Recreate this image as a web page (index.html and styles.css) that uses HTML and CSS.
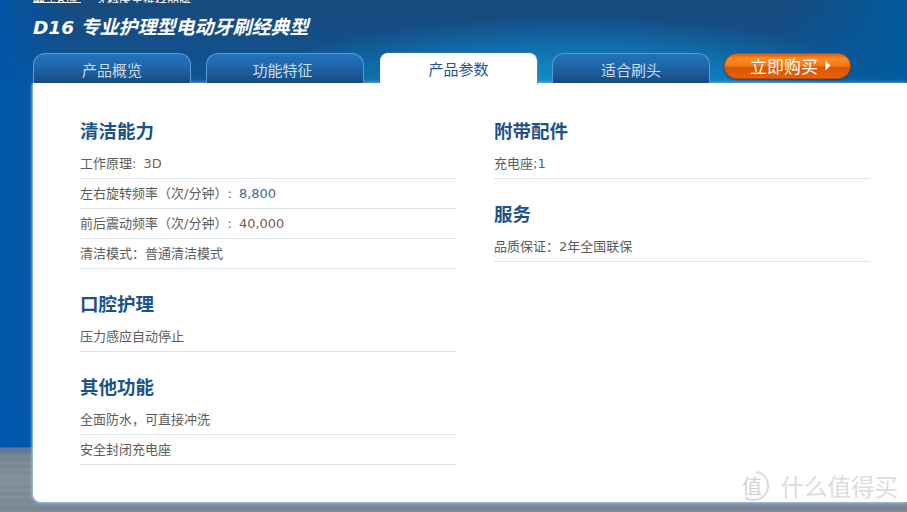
FILE: index.html
```html
<!DOCTYPE html>
<html lang="zh-CN">
<head>
    <meta charset="UTF-8">
    <title>D16 产品参数</title>
    <link rel="stylesheet" href="styles.css">
</head>
<body>
    <div class="page">
        <div class="topline">
            <span class="logo">欧乐B博朗</span>
            <span class="slogan">牙科医生推荐品牌</span>
        </div>
        <h1 class="title"><b>D16</b> 专业护理型电动牙刷经典型</h1>
        <div class="tabs">
            <a class="tab">产品概览</a>
            <a class="tab">功能特征</a>
            <a class="tab active">产品参数</a>
            <a class="tab">适合刷头</a>
            <a class="buy">立即购买<svg width="6" height="11" viewBox="0 0 6 11"><path d="M0.5 0.5 L5.5 5.5 L0.5 10.5 Z" fill="#fff"/></svg></a>
        </div>
        <div class="panel">
            <div class="col">
                <div class="section">
                    <h2>清洁能力</h2>
                    <div class="row">工作原理<i class="brown">: 3D</i></div>
                    <div class="row">左右旋转频率（次/分钟）<i class="blue">: 8,800</i></div>
                    <div class="row">前后震动频率（次/分钟）<i class="brown">: 40,000</i></div>
                    <div class="row">清洁模式：普通清洁模式</div>
                </div>
                <div class="section">
                    <h2>口腔护理</h2>
                    <div class="row">压力感应自动停止</div>
                </div>
                <div class="section">
                    <h2>其他功能</h2>
                    <div class="row">全面防水，可直接冲洗</div>
                    <div class="row">安全封闭充电座</div>
                </div>
            </div>
            <div class="col">
                <div class="section">
                    <h2>附带配件</h2>
                    <div class="row">充电座<i class="blue">;1</i></div>
                </div>
                <div class="section">
                    <h2>服务</h2>
                    <div class="row">品质保证：2年全国联保</div>
                </div>
            </div>
        </div>
        <div class="mark">
            <svg class="mark-logo" width="30" height="32" viewBox="0 0 30 32">
                <path d="M17 2 C25 3 29 9 29 16 C29 24 23 30 15 30 C11 30 8 29 6 27" fill="none" stroke="#dcdcdc" stroke-width="2"/>
                <text x="13" y="24" text-anchor="middle">值</text>
            </svg>
            <span>什么值得买</span>
        </div>
    </div>
</body>
</html>
```

FILE: styles.css
```css
* {
    margin: 0;
    padding: 0;
    box-sizing: border-box;
}
body {
    width: 907px;
    height: 512px;
    overflow: hidden;
    font-family: "DejaVu Sans", "Noto Sans CJK SC", sans-serif;
}
.page {
    position: relative;
    height: 512px;
    padding-left: 33px;
    overflow: hidden;
    background:
        linear-gradient(90deg, rgba(0,86,170,.95) 0, rgba(0,86,170,0) 70px) 0 0 / 100% 447px no-repeat,
        linear-gradient(270deg, rgba(0,92,160,.9) 0, rgba(0,92,160,0) 130px) 0 0 / 100% 100px no-repeat,
        radial-gradient(ellipse 330px 75px at 570px 92px, #0f93d0 0, rgba(15,147,208,.7) 40%, rgba(15,147,208,0) 100%),
        repeating-linear-gradient(180deg, rgba(255,255,255,.025) 0, rgba(255,255,255,.025) 3px, rgba(0,0,0,.02) 3px, rgba(0,0,0,.02) 7px) 0 447px / 100% 65px no-repeat,
        linear-gradient(180deg, #184a7d 0, #12508c 50px, #0a5a9c 100px, #0358ac 447px, #52749a 448px, #76868f 456px, #84919a 480px, #7b8891 512px);
}
.topline {
    display: flex;
    gap: 14px;
    height: 3px;
    overflow: hidden;
    font-size: 12px;
    line-height: 3px;
    color: #fff;
}
.logo {
    width: 48px;
    border-bottom: 1px solid #fff;
    background: #123f70;
}
.title {
    margin-top: 10px;
    height: 25px;
    font-size: 19px;
    line-height: 25px;
    font-weight: bold;
    font-style: italic;
    color: #fff;
    font-family: "Noto Sans CJK SC", sans-serif;
}
.title b {
    font-family: "DejaVu Sans", sans-serif;
    font-size: 18.5px;
    margin-right: 2px;
}
.tabs {
    display: flex;
    align-items: flex-start;
    margin-top: 15px;
    height: 30px;
    gap: 15px;
}
.tab {
    width: 158px;
    height: 30px;
    border: 1px solid #5d9ccf;
    border-bottom: 0;
    border-radius: 12px 12px 0 0;
    background: linear-gradient(180deg, #2272bb 0, #1f68ad 40%, #174a80 100%);
    color: #cddbeb;
    font-size: 15px;
    line-height: 32px;
    text-align: center;
    font-family: "Noto Sans CJK SC", sans-serif;
}
.tab:nth-child(2) {
    padding-right: 5px;
}
.tab.active {
    position: relative;
    width: 157px;
    height: 32px;
    margin-left: 1px;
    border: 0;
    border-radius: 8px 8px 0 0;
    background: #fff;
    color: #1f5497;
    line-height: 32px;
    box-shadow: 1px 0 2px rgba(90,140,200,.7);
    clip-path: inset(-3px -3px 0 -3px);
}
.buy {
    display: flex;
    align-items: center;
    justify-content: center;
    gap: 7px;
    width: 127px;
    height: 26px;
    margin-left: -1px;
    padding-bottom: 1px;
    padding-left: 6px;
    border-radius: 13px;
    border: 1px solid #c34a05;
    background: linear-gradient(180deg, #df5b08 0, #ff8a22 18%, #f37a18 50%, #dc5400 55%, #e66205 100%);
    box-shadow: 0 1px 2px rgba(10,50,100,.6);
    color: #fff;
    font-size: 17px;
    font-family: "Noto Sans CJK SC", sans-serif;
}
.panel {
    display: flex;
    gap: 38px;
    height: 419px;
    padding: 35px 36px 0 47px;
    background: #fff;
    border-radius: 0 0 0 8px;
    box-shadow: 0 0 4px #8fb6de, -1px 1px 2px #9fc2e6;
}
.col {
    width: 376px;
}
.section + .section {
    margin-top: 22px;
}
h2 {
    height: 31px;
    font-size: 18.5px;
    line-height: 24px;
    font-weight: bold;
    color: #1d5288;
    font-family: "Noto Sans CJK SC", sans-serif;
}
.row {
    height: 30px;
    border-bottom: 1px solid #dce5ec;
    font-size: 13px;
    line-height: 29px;
    color: #5c5c5c;
}
.row i {
    font-style: normal;
    word-spacing: 3px;
}
.brown {
    color: #85584e;
}
.blue {
    color: #3c6a92;
}
.mark {
    position: absolute;
    right: 9px;
    bottom: 10px;
    display: flex;
    align-items: center;
    gap: 12px;
    font-size: 23.5px;
    line-height: 32px;
    color: #dcdcdc;
    font-family: "Noto Sans CJK SC", sans-serif;
}
.mark-logo text {
    font-size: 20px;
    fill: #d2d2d2;
}
```
